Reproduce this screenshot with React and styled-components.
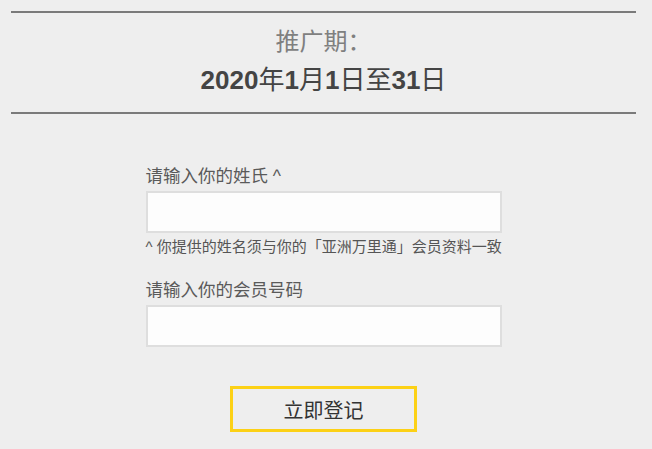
import styled, { createGlobalStyle } from "styled-components";

const GlobalStyle = createGlobalStyle`
  html, body {
    margin: 0;
    padding: 0;
    background: #eeeeee;
  }
  body {
    font-family: "Liberation Sans", "Noto Sans CJK SC", sans-serif;
    color: #555;
  }
`;

const Page = styled.div`
  width: 625px;
  margin-left: 11px;
  padding-top: 11px;
`;

const Period = styled.div`
  border-top: 2px solid #7a7a7a;
  border-bottom: 2px solid #7a7a7a;
  padding: 15px 0 17px;
  text-align: center;
`;

const PeriodLabel = styled.div`
  font-size: 24px;
  line-height: 28px;
  color: #7f7f7f;
`;

const PeriodDates = styled.div`
  margin-top: 9px;
  font-size: 26px;
  line-height: 30px;
  font-weight: bold;
  color: #444;
`;

const Han = styled.span`
  font-weight: normal;
`;

const Form = styled.form`
  width: 356px;
  margin: 0 auto;
  padding-top: 51px;
  display: flex;
  flex-direction: column;
`;

const Label = styled.label`
  font-size: 17.5px;
  line-height: 22px;
  color: #5a5a5a;
  margin-bottom: 4px;
`;

const Input = styled.input`
  box-sizing: border-box;
  width: 356px;
  height: 42px;
  border: 2px solid #dedede;
  background: #fdfdfd;
  outline: none;
  padding: 0 10px;
  font-size: 15px;
`;

const Note = styled.div`
  font-size: 15px;
  line-height: 18px;
  margin-top: 5px;
  margin-bottom: 23px;
  color: #555;
  white-space: nowrap;
`;

const Spacer = styled.div`
  height: ${(p) => p.h}px;
`;

const Submit = styled.button`
  align-self: center;
  box-sizing: border-box;
  width: 187px;
  height: 46px;
  border: 3px solid #fcd116;
  background: transparent;
  font-family: "Liberation Sans", "Noto Sans CJK SC", sans-serif;
  font-size: 20px;
  color: #333;
  cursor: pointer;
`;

export default function App() {
  return (
    <>
      <GlobalStyle />
      <Page>
        <Period>
          <PeriodLabel>推广期：</PeriodLabel>
          <PeriodDates>
            2020<Han>年</Han>1<Han>月</Han>1<Han>日至</Han>31<Han>日</Han>
          </PeriodDates>
        </Period>
        <Form onSubmit={(e) => e.preventDefault()}>
          <Label>请输入你的姓氏 ^</Label>
          <Input type="text" />
          <Note>^ 你提供的姓名须与你的「亚洲万里通」会员资料一致</Note>
          <Label>请输入你的会员号码</Label>
          <Input type="text" />
          <Spacer h={39} />
          <Submit type="submit">立即登记</Submit>
        </Form>
      </Page>
    </>
  );
}
